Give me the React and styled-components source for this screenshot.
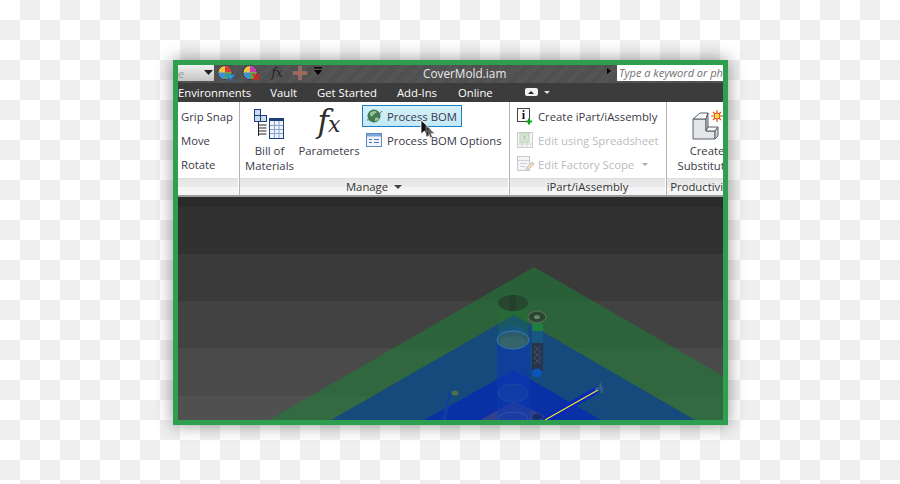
import React from "react";
import styled, { createGlobalStyle } from "styled-components";

const Global = createGlobalStyle`
  html, body { margin: 0; padding: 0; }
  body {
    width: 900px; height: 484px; overflow: hidden;
    background: repeating-conic-gradient(#efefef 0 25%, #ffffff 0 50%) 0 0 / 40px 40px;
    font-family: "Open Sans", "Noto Sans", sans-serif;
  }
`;
const Page = styled.div`
  padding: 60px 0 0 173px;
`;
const Frame = styled.div`
  width: 545px; height: 355px;
  border: 5px solid #2e9e4f;
  box-shadow: 0 0 16px rgba(0,0,0,.42);
  display: flex; flex-direction: column;
  overflow: hidden;
  position: relative;
`;
const TitleBar = styled.div`
  height: 18px; flex: none;
  display: flex; align-items: flex-start;
  background: repeating-linear-gradient(135deg, #4c4c4c 0 1px, #585858 1px 2px);
  position: relative;
`;
const Combo = styled.div`
  width: 36px; height: 16px;
  background: linear-gradient(#f0f0f0, #c4c4c4);
  display: flex; align-items: center; justify-content: space-between;
  padding: 0 1px 0 0; box-sizing: border-box;
  font-size: 11px; color: #999;
`;
const QuickIcons = styled.div`
  display: flex; align-items: center; height: 16px;
  padding-left: 3px; gap: 5px;
`;
const DocTitle = styled.div`
  position: absolute; left: 245px; top: 0; height: 16px;
  font-size: 11.8px; line-height: 16px; color: #e8e8e8;
`;
const Search = styled.div`
  width: 106px; height: 16px;
  background: #fff; color: #707070; font-style: italic;
  font-size: 11px; line-height: 16px; padding-left: 2px; box-sizing: border-box;
  white-space: nowrap; overflow: hidden;
`;
const SearchArrow = styled.div`
  width: 0; height: 0; margin: 3px 6px 0 auto;
  border-left: 4px solid #000; border-top: 3.5px solid transparent; border-bottom: 3.5px solid transparent;
`;
const Tabs = styled.div`
  height: 19px; flex: none;
  background: #3c3c3c;
  display: flex; align-items: center;
  color: #fff; font-size: 11.3px; line-height: 17px; padding-bottom: 1px; box-sizing: border-box;
  white-space: nowrap;
`;
const Tab = styled.span`
  margin-right: ${p => p.$gap}px;
`;
const Pill = styled.span`
  width: 13px; height: 8px; background: #f0f0f0; border-radius: 2px;
  display: flex; align-items: center; justify-content: center; margin-left: 32px;
  &::after { content: ""; border-left: 3px solid transparent; border-right: 3px solid transparent; border-bottom: 3px solid #222; }
`;
const TinyDown = styled.span`
  width: 0; height: 0; margin-left: 6px;
  border-left: 3px solid transparent; border-right: 3px solid transparent; border-top: 3px solid #ddd;
`;
const Ribbon = styled.div`
  height: 95px; flex: none; background: #fff;
  display: flex; overflow: hidden;
  color: #3a3a48; font-size: 11.3px; white-space: nowrap;
  box-shadow: inset 0 -2px 0 #9c9c9c;
`;
const Panel = styled.div`
  width: ${p => p.$w}px; flex: none;
  display: flex; flex-direction: column;
  height: 93px;
  border-right: ${p => p.$last ? "none" : "1px solid #b4b4b4"};
  overflow: hidden;
`;
const PanelBody = styled.div`
  flex: 1; min-height: 0;
  display: flex; align-items: flex-start;
  padding: 3px 0 0 ${p => p.$pad || 0}px;
  margin-right: 1px;
`;
const PanelFoot = styled.div`
  height: 16px; flex: none; margin-right: 1px;
  background: linear-gradient(#e6e6e6 0, #ebebeb 50%, #f5f5f5 52%, #f5f5f5 100%);
  border-top: 1px solid #dcdcdc;
  display: flex; align-items: center; justify-content: center; gap: 6px;
  font-size: 11.3px; color: #333; line-height: 16px;
`;
const Caret = styled.span`
  width: 0; height: 0;
  border-left: 4px solid transparent; border-right: 4px solid transparent; border-top: 4px solid #444;
`;
const Stack = styled.div`
  display: flex; flex-direction: column; align-items: flex-start;
  margin-left: ${p => p.$ml || 0}px;
`;
const Row = styled.div`
  height: 22px; margin-bottom: 2px;
  display: flex; align-items: center; gap: 4px;
  padding: 0 ${p => p.$pr || 0}px 0 ${p => p.$pl || 0}px;
  border: 1.5px solid ${p => p.$hot ? "#1e7fc2" : "transparent"};
  box-sizing: border-box;
  background: ${p => p.$hot ? "linear-gradient(#d4f1fb, #c2e8f7)" : "none"};
  color: ${p => p.$off ? "#b9bcc2" : "inherit"};
`;
const Large = styled.div`
  width: ${p => p.$w}px; flex: none;
  display: flex; flex-direction: column; align-items: center;
  text-align: center; line-height: 15px;
  margin-left: ${p => p.$ml || 0}px;
`;
const LargeIcon = styled.div`
  height: 38px; display: flex; align-items: center; justify-content: center;
`;
const BigFx = styled.span`
  font-family: "DejaVu Serif", "Liberation Serif", serif; font-style: italic;
  font-size: 31px; line-height: 38px; color: #2e2e2e; margin-top: -2px;
`;
const BigX = styled.span`
  font-size: 22px; margin-left: -1px;
`;
const SmallFx = styled.span`
  font-family: "DejaVu Serif", "Liberation Serif", serif; font-style: italic;
  font-size: 12px; line-height: 16px; color: #222; width: 20px; text-align: center;
`;
const DownMini = styled.span`
  width: 0; height: 0; margin-left: 4px;
  border-left: 3px solid transparent; border-right: 3px solid transparent; border-top: 3px solid #aaa;
`;
const Viewport = styled.div`
  flex: 1; min-height: 0;
  background: linear-gradient(#2b2b2b 0 10px, #313131 10px 57px, #3a3a3a 57px 104px, #424242 104px 151px, #4a4a4a 151px 199px, #505050 199px);
  & > svg { display: block; }
`;
const Cursor = styled.svg`
  position: absolute; left: 242px; top: 54px;
`;

const Quick1 = () => (
  <svg width="20" height="16" viewBox="0 0 20 16">
    <circle cx="8" cy="7.500" r="7" fill="#f3c23c" stroke="#2a3a5a" />
    <path d="M8 7.500V1A6.500 6.500 0 0 1 14.500 7.500Z" fill="#d83b3b" />
    <path d="M8 7.500H1.500A6.500 6.500 0 0 0 8 14Z" fill="#3a8fd8" />
    <path d="M8 7.500H14.500A6.500 6.500 0 0 1 8 14Z" fill="#4aa84a" />
    <path d="M9 10h9l-4.500 4zM10 15h7" fill="#2b9fe4" stroke="#2b7fd4" strokeWidth=".8" />
  </svg>
);
const Quick2 = () => (
  <svg width="20" height="16" viewBox="0 0 20 16">
    <circle cx="8" cy="7.500" r="7" fill="#f3c23c" stroke="#2a3a5a" />
    <path d="M8 7.500V1A6.500 6.500 0 0 1 14.500 7.500Z" fill="#c83bb0" />
    <path d="M8 7.500H1.500A6.500 6.500 0 0 0 8 14Z" fill="#3a8fd8" />
    <path d="M8 7.500H14.500A6.500 6.500 0 0 1 8 14Z" fill="#4aa84a" />
    <path d="M11 9l6 6M17 9l-6 6" stroke="#e02020" strokeWidth="2" />
  </svg>
);
const QuickCross = () => (
  <svg width="16" height="16" viewBox="0 0 16 16">
    <path d="M6.500 1h3v5.500H15v3H9.500V15h-3V9.500H1v-3h5.500Z" fill="#a9645c" stroke="#8a7a72" strokeWidth=".6" />
  </svg>
);
const QuickMenu = () => (
  <svg width="10" height="16" viewBox="0 0 10 16">
    <path d="M1 2h8v1.500H1zM1 5h8L5 10z" fill="#000" />
  </svg>
);
const ComboArrow = () => (
  <svg width="9" height="6" viewBox="0 0 9 6"><path d="M0 0h9L4.500 5z" fill="#222" /></svg>
);
const BomIcon = () => (
  <svg width="32" height="32" viewBox="0 0 32 32">
    <rect x=".5" y="1.500" width="6" height="6" fill="#c9dcf2" stroke="#1f3f78" />
    <rect x=".5" y="7.500" width="6" height="6" fill="#c9dcf2" stroke="#1f3f78" />
    <rect x="6.500" y="7.500" width="6" height="6" fill="#c9dcf2" stroke="#1f3f78" />
    <path d="M4.500 14v14M4.500 17h8M4.500 20h8M4.500 23h8M4.500 26h8" stroke="#222" fill="none" />
    <rect x="15.500" y="10.500" width="14" height="20" fill="#eef3fb" stroke="#1f3f78" />
    <rect x="15.500" y="10.500" width="14" height="2.500" fill="#1f3f78" />
    <path d="M20.500 13v17M25 13v17M16 17.500h13M16 21.500h13M16 25.500h13" stroke="#8aa3c8" fill="none" />
  </svg>
);
const GlobeIcon = () => (
  <svg width="17" height="14" viewBox="0 0 17 14">
    <ellipse cx="8" cy="7" rx="6.500" ry="6.500" fill="#3a7f4e" />
    <path d="M4 4c2-2 5-3 7-1-1 2-4 1-4 4-2 1-3 0-3-3zM9 9c2-1 4 0 4 1-1 2-3 2-4 2z" fill="#9cc2a0" />
    <path d="M1 11C4 11 13 7 16 2" stroke="#666" fill="none" strokeWidth="1" />
  </svg>
);
const OptionsIcon = () => (
  <svg width="17" height="14" viewBox="0 0 17 14">
    <rect x=".5" y=".5" width="15" height="13" fill="#f2f6fc" stroke="#5d8ac7" />
    <rect x="1" y="1" width="14" height="2.500" fill="#7fa6d8" />
    <path d="M3 6.500h3M3 9.500h3M8 6.500h5M8 9.500h5" stroke="#4a78b4" />
  </svg>
);
const IPartIcon = () => (
  <svg width="17" height="17" viewBox="0 0 17 17">
    <rect x=".5" y=".5" width="12" height="13" fill="#fdfdfd" stroke="#444" />
    <text x="6.500" y="11" fontFamily="Liberation Serif, serif" fontWeight="700" fontSize="12" textAnchor="middle" fill="#111">i</text>
    <path d="M9 13.500h6M12 10.500v6" stroke="#0fa31e" strokeWidth="2" />
  </svg>
);
const SheetIcon = () => (
  <svg width="17" height="16" viewBox="0 0 17 16">
    <rect x=".5" y=".5" width="15" height="15" fill="#f5f6f4" stroke="#ccd0cc" />
    <rect x="3" y="1" width="9" height="9" fill="#dcebd9" stroke="#b7cfb3" />
    <path d="M5.500 3l4 5M9.500 3l-4 5" stroke="#a8c3a3" />
    <path d="M1 12h14M5 10v6M10 10v6" stroke="#d2d4d2" />
  </svg>
);
const ScopeIcon = () => (
  <svg width="17" height="16" viewBox="0 0 17 16">
    <rect x=".5" y=".5" width="12" height="14" fill="#f4f4f6" stroke="#c8cad0" />
    <path d="M1 4.500h11M3 7.500h7M3 10.500h5" stroke="#cfd2d8" />
    <path d="M9 14l1-3 5-5 2 2-5 5z" fill="#efd9c2" stroke="#d2c2b2" />
  </svg>
);
const SubstituteIcon = () => (
  <svg width="32" height="34" viewBox="0 0 32 34">
    <path d="M2 12h13v12h9v8H2z" fill="#e4e7ea" stroke="#5a6068" />
    <path d="M2 12l7-6h8l-2 6z" fill="#f8f9fa" stroke="#5a6068" />
    <path d="M15 12l2-6v14l-2 4z" fill="#cfd3d8" stroke="#5a6068" />
    <path d="M15 24l2-4h10l-3 4z" fill="#f8f9fa" stroke="#5a6068" />
    <path d="M24 24l3-4v9l-3 3z" fill="#cfd3d8" stroke="#5a6068" />
    <path d="M26 3v12M20 9h12M22 5l8 8M30 5l-8 8" stroke="#e8501a" strokeWidth="1.200" />
    <circle cx="26" cy="9" r="3" fill="#f6e04a" stroke="#e64a1a" />
  </svg>
);

const Scene = () => (
  <svg width="545" height="223" viewBox="178 197 545 223">
    <polygon points="534,267 723,376 723,420 269,420" fill="#1c8034" fillOpacity=".55" />
    <polygon points="514,315 695,420 331,420" fill="#164a7c" />
    <polygon points="514,370 601,420 424,420" fill="#0a30a6" />
    <polygon points="514,401 552,420 480,420" fill="#33408e" />
    <rect x="498" y="303" width="30" height="37" fill="#1f7a33" fillOpacity=".3" />
    <ellipse cx="513" cy="303" rx="15" ry="8" fill="#27482f" />
    <rect x="509" y="295" width="7" height="16" fill="#1f3a26" fillOpacity=".5" />
    <rect x="497" y="340" width="33" height="80" fill="#0a3ab0" fillOpacity=".6" />
    <ellipse cx="513" cy="337" rx="16" ry="11" fill="#1a5aa0" fillOpacity=".4" />
    <ellipse cx="513" cy="340" rx="16" ry="9" fill="#2c5c6c" stroke="#3a78ac" />
    <ellipse cx="513" cy="342" rx="13" ry="6" fill="#35646a" />
    <ellipse cx="513" cy="393" rx="15" ry="9" fill="#1a45a0" fillOpacity=".4" stroke="#1a4aa8" />
    <ellipse cx="513" cy="419" rx="15" ry="7" fill="none" stroke="#2f56a4" />
    <ellipse cx="537" cy="317" rx="9" ry="6" fill="#2a4630" stroke="#4f6a54" strokeWidth="1.500" />
    <ellipse cx="537" cy="317" rx="3" ry="2" fill="#6a846f" />
    <rect x="532" y="323" width="11" height="9" rx="3" fill="#1f7f40" />
    <rect x="532" y="331" width="11" height="13" fill="#1a5682" />
    <rect x="532" y="343" width="11" height="28" fill="#26344e" />
    <path d="M534 346l7 6-7 6 7 6M541 346l-7 6 7 6-7 6" stroke="#4e5e74" strokeWidth=".8" fill="none" />
    <ellipse cx="537" cy="373" rx="5" ry="4.500" fill="#0a56bc" />
    <path d="M450 393L444 420" stroke="#12409f" strokeWidth="3" />
    <ellipse cx="455" cy="393" rx="3.500" ry="2.500" fill="#50704a" />
    <path d="M544 421L597 390" stroke="#0a28b8" strokeWidth="7" />
    <path d="M545 420L598 390" stroke="#f7f020" strokeWidth="1.100" />
    <path d="M595 389l8-1M600 383l2 10" stroke="#36608e" strokeWidth="2" />
    <ellipse cx="537" cy="417" rx="5" ry="3" fill="#14306a" />
  </svg>
);

export default function App() {
  return (
    <>
      <Global />
      <Page>
        <Frame>
          <TitleBar>
            <Combo><span>e</span><ComboArrow /></Combo>
            <QuickIcons>
              <Quick1 /><Quick2 /><SmallFx>fx</SmallFx><QuickCross /><QuickMenu />
            </QuickIcons>
            <DocTitle>CoverMold.iam</DocTitle>
            <SearchArrow />
            <Search>Type a keyword or phrase</Search>
          </TitleBar>
          <Tabs>
            <Tab $gap={19}>Environments</Tab>
            <Tab $gap={20}>Vault</Tab>
            <Tab $gap={20}>Get Started</Tab>
            <Tab $gap={21}>Add-Ins</Tab>
            <Tab $gap={0}>Online</Tab>
            <Pill /><TinyDown />
          </Tabs>
          <Ribbon>
            <Panel $w={61}>
              <PanelBody>
                <Stack>
                  <Row $pl={2}>Grip Snap</Row>
                  <Row $pl={2}>Move</Row>
                  <Row $pl={2}>Rotate</Row>
                </Stack>
              </PanelBody>
              <PanelFoot />
            </Panel>
            <Panel $w={269}>
              <PanelBody $pad={5}>
                <Large $w={49}>
                  <LargeIcon><BomIcon /></LargeIcon>
                  <span>Bill of</span>
                  <span>Materials</span>
                </Large>
                <Large $w={60} $ml={5}>
                  <LargeIcon><BigFx>f<BigX>x</BigX></BigFx></LargeIcon>
                  Parameters
                </Large>
                <Stack $ml={3}>
                  <Row $hot $pl={3} $pr={4}><GlobeIcon />Process BOM</Row>
                  <Row $pl={3}><OptionsIcon />Process BOM Options</Row>
                </Stack>
              </PanelBody>
              <PanelFoot>Manage <Caret /></PanelFoot>
            </Panel>
            <Panel $w={156}>
              <PanelBody $pad={6}>
                <Stack>
                  <Row><IPartIcon />Create iPart/iAssembly</Row>
                  <Row $off><SheetIcon />Edit using Spreadsheet</Row>
                  <Row $off><ScopeIcon />Edit Factory Scope <DownMini /></Row>
                </Stack>
              </PanelBody>
              <PanelFoot>iPart/iAssembly</PanelFoot>
            </Panel>
            <Panel $w={70} $last>
              <PanelBody $pad={15}>
                <Large $w={50}>
                  <LargeIcon><SubstituteIcon /></LargeIcon>
                  <span>Create</span>
                  <span>Substitutes</span>
                </Large>
              </PanelBody>
              <PanelFoot>Productivity</PanelFoot>
            </Panel>
          </Ribbon>
          <Viewport><Scene /></Viewport>
          <Cursor width="18" height="20" viewBox="0 0 18 20">
            <path d="M1 1v14l3.500-3 2.500 6 2.500-1-2.500-6h4.500z" fill="#111" stroke="#fff" strokeWidth=".8" />
            <path d="M6 7v11l3-2.500 1.500 3.500 2-1-1.500-3.500h4z" fill="#333" stroke="#eee" strokeWidth=".6" opacity=".8" />
          </Cursor>
        </Frame>
      </Page>
    </>
  );
}
